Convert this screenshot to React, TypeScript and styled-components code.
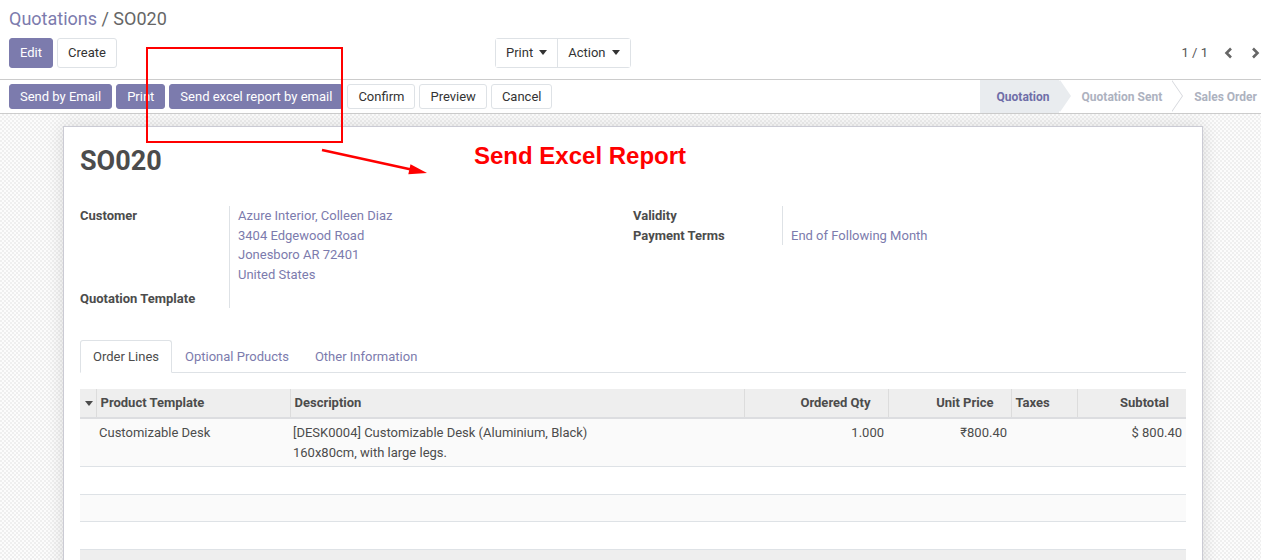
import React from 'react';
import styled, { createGlobalStyle, css } from 'styled-components';

const PRIMARY = '#7C7BAD';
const LINE = '#dee2e6';

const GlobalStyle = createGlobalStyle`
  html, body {
    margin: 0;
    padding: 0;
  }
  body {
    font-family: Roboto, 'Noto Sans', 'Liberation Sans', sans-serif;
    font-size: 13px;
    line-height: 1.5;
    color: #4c4c4c;
    background: #fff;
    overflow: hidden;
  }
  * {
    box-sizing: border-box;
  }
`;

const Page = styled.div`
  position: relative;
  width: 1261px;
  height: 560px;
  overflow: hidden;
  display: flex;
  flex-direction: column;
`;

/* ---------- control panel ---------- */

const ControlPanel = styled.div`
  padding: 6px 0 11px 0;
  border-bottom: 1px solid #ccc;
`;

const Breadcrumb = styled.div`
  padding-left: 9px;
  font-size: 18px;
  line-height: 26px;
  margin-bottom: 6px;
  color: #666;

  a {
    color: ${PRIMARY};
    text-decoration: none;
  }
`;

const CpRow = styled.div`
  display: grid;
  grid-template-columns: 50% 50%;
  height: 30px;
`;

const CpLeft = styled.div`
  display: flex;
  justify-content: space-between;
  padding-left: 9px;
`;

const CpRight = styled.div`
  display: flex;
  justify-content: flex-end;
  align-items: center;
  margin-right: -8px;
`;

const ButtonGroup = styled.div<{ $gap?: number }>`
  display: flex;
  gap: ${(p) => p.$gap ?? 4}px;
`;

const Button = styled.button<{ $primary?: boolean; $compact?: boolean }>`
  font-family: inherit;
  font-size: 13px;
  line-height: ${(p) => (p.$compact ? '19px' : '20px')};
  padding: ${(p) => (p.$compact ? '2px 10px' : '4px 10px')};
  border-radius: 3px;
  border: 1px solid ${(p) => (p.$primary ? PRIMARY : LINE)};
  background: ${(p) => (p.$primary ? PRIMARY : '#fff')};
  color: ${(p) => (p.$primary ? '#fff' : '#333')};
  white-space: nowrap;
  cursor: pointer;
`;

const DropGroup = styled.div`
  display: flex;
  border: 1px solid ${LINE};
  border-radius: 3px;
`;

const DropButton = styled.button`
  font-family: inherit;
  font-size: 13px;
  line-height: 20px;
  padding: 4px 10px;
  border: none;
  background: #fff;
  color: #333;
  display: flex;
  align-items: center;

  & + & {
    border-left: 1px solid ${LINE};
  }
`;

const Caret = styled.span`
  display: inline-block;
  margin-left: 6px;
  margin-top: -2px;
  border-top: 5px solid #333;
  border-left: 4.5px solid transparent;
  border-right: 4.5px solid transparent;
`;

const PagerValue = styled.span`
  color: #555;
  margin-right: 7px;
`;

const PagerButton = styled.button`
  width: 27px;
  height: 30px;
  border: none;
  background: transparent;
  display: flex;
  align-items: center;
  justify-content: center;
  padding: 0;
`;

const Chevron = ({ dir }: { dir: 'left' | 'right' }) => (
  <svg width="9" height="12" viewBox="0 0 9 12">
    <polyline
      points={dir === 'left' ? '7,1.5 2.5,6 7,10.5' : '2,1.5 6.5,6 2,10.5'}
      fill="none"
      stroke="#666"
      strokeWidth="2.6"
      strokeLinejoin="miter"
    />
  </svg>
);

/* ---------- status bar ---------- */

const StatusBar = styled.div`
  display: flex;
  justify-content: space-between;
  height: 34px;
  border-bottom: 1px solid #ccc;
`;

const StatusButtons = styled.div`
  display: flex;
  gap: 4px;
  padding: 4px 9px;
`;

const Steps = styled.div`
  display: flex;
  margin-right: -5px;
`;

const Step = styled.div<{ $active?: boolean; $first?: boolean; $last?: boolean }>`
  position: relative;
  display: flex;
  align-items: center;
  padding: 0 9px 0 ${(p) => (p.$first ? 17 : 23)}px;
  background: ${(p) => (p.$active ? '#e9ecef' : '#fff')};
  color: ${(p) => (p.$active ? '#6f6ea8' : '#adb2bf')};
  font-size: 12px;
  font-weight: 700;
  white-space: nowrap;

  ${(p) =>
    !p.$last &&
    css`
      &::before,
      &::after {
        content: '';
        position: absolute;
        top: 0;
        left: 100%;
        border-top: 16.5px solid transparent;
        border-bottom: 16.5px solid transparent;
        border-left: 11px solid transparent;
        z-index: 1;
      }
      &::before {
        border-left-color: ${p.$active ? '#e9ecef' : '#d6d8dd'};
        margin-left: 1px;
      }
      &::after {
        border-left-color: ${p.$active ? '#e9ecef' : '#fff'};
      }
    `}
`;

/* ---------- sheet ---------- */

const SheetBg = styled.div`
  flex: 1;
  background-color: #f8f8f8;
  background-image: repeating-conic-gradient(#efefef 0% 25%, #fcfcfc 0% 50%);
  background-size: 4px 4px;
  padding: 12px 0 0 63px;
`;

const Sheet = styled.div`
  width: 1140px;
  height: 480px;
  background: #fff;
  border: 1px solid #cbcbd4;
  box-shadow: 0 0 16px rgba(0, 0, 0, 0.13);
  padding: 15px 16px 0;
`;

const Title = styled.h1`
  margin: 0;
  font-size: 27px;
  line-height: 38px;
  font-weight: 700;
  color: #4c4c4c;
`;

const Groups = styled.div`
  display: grid;
  grid-template-columns: 1fr 1fr;
  margin-top: 26px;
`;

const FieldTable = styled.div`
  display: grid;
  grid-template-columns: 149px 1fr;
  align-content: start;
`;

const Label = styled.div`
  font-weight: 700;
  line-height: 19.5px;
  color: #4c4c4c;
`;

const Value = styled.div`
  border-left: 1px solid ${LINE};
  padding-left: 8px;
  line-height: 19.5px;
  color: ${PRIMARY};
  min-height: 19.5px;
`;

const Address = styled.div`
  margin-bottom: 4.5px;
`;

const Tabs = styled.ul`
  list-style: none;
  margin: 32px 0 0;
  padding: 0;
  display: flex;
  border-bottom: 1px solid ${LINE};
`;

const Tab = styled.li<{ $active?: boolean }>`
  padding: 6px 12px;
  line-height: 19px;
  margin-bottom: -1px;
  border: 1px solid transparent;
  border-radius: 3px 3px 0 0;
  color: ${PRIMARY};

  ${(p) =>
    p.$active &&
    css`
      border-color: ${LINE} ${LINE} #fff;
      background: #fff;
      color: #4c4c4c;
    `}
`;

const Table = styled.table`
  width: 100%;
  margin-top: 16px;
  border-collapse: collapse;
  table-layout: fixed;
`;

const Th = styled.th<{ $num?: boolean }>`
  background: #eee;
  font-weight: 700;
  line-height: 20px;
  padding: 4px ${(p) => (p.$num ? '17px' : '4px')} 4px 4px;
  text-align: ${(p) => (p.$num ? 'right' : 'left')};
  border-bottom: 2px solid #dcdde0;
  white-space: nowrap;
  color: #4c4c4c;

  & + & {
    border-left: 1px solid #dcdcdc;
  }
`;

const Row = styled.tr<{ $striped?: boolean }>`
  background: ${(p) => (p.$striped ? '#fafafa' : '#fff')};
  border-bottom: 1px solid ${LINE};
`;

const Td = styled.td<{ $num?: boolean }>`
  padding: 4px ${(p) => (p.$num ? '4px' : '3px')} 4px 3px;
  line-height: 19.5px;
  text-align: ${(p) => (p.$num ? 'right' : 'left')};
  vertical-align: top;
  color: #4c4c4c;
`;

const EmptyCell = styled.td`
  padding: 3.5px 3px;
  line-height: 19.5px;
`;

const FootRow = styled.tr`
  background: #eee;
  height: 28px;
`;

const SortCaret = styled.span`
  display: inline-block;
  vertical-align: middle;
  margin-left: 1px;
  border-top: 5px solid #4c4c4c;
  border-left: 4px solid transparent;
  border-right: 4px solid transparent;
`;

/* ---------- annotation overlay ---------- */

const Callout = styled.div`
  position: absolute;
  left: 146px;
  top: 47px;
  width: 197px;
  height: 96px;
  border: 2px solid #ff0000;
  pointer-events: none;
`;

const CalloutArrow = styled.svg`
  position: absolute;
  left: 310px;
  top: 140px;
  pointer-events: none;
`;

const CalloutLabel = styled.div`
  position: absolute;
  left: 474px;
  top: 142px;
  font-family: 'Liberation Sans', Arial, sans-serif;
  font-size: 24px;
  line-height: 28px;
  font-weight: 700;
  color: #ff0000;
  white-space: nowrap;
`;

const lines = [
  {
    product: 'Customizable Desk',
    description: ['[DESK0004] Customizable Desk (Aluminium, Black)', '160x80cm, with large legs.'],
    qty: '1.000',
    price: '₹800.40',
    taxes: '',
    subtotal: '$ 800.40',
  },
];

export default function App() {
  return (
    <Page>
      <GlobalStyle />
      <ControlPanel>
        <Breadcrumb>
          <a href="#">Quotations</a> / SO020
        </Breadcrumb>
        <CpRow>
          <CpLeft>
            <ButtonGroup>
              <Button $primary>Edit</Button>
              <Button>Create</Button>
            </ButtonGroup>
            <DropGroup>
              <DropButton>
                Print
                <Caret />
              </DropButton>
              <DropButton>
                Action
                <Caret />
              </DropButton>
            </DropGroup>
          </CpLeft>
          <CpRight>
            <PagerValue>1 / 1</PagerValue>
            <PagerButton aria-label="Previous">
              <Chevron dir="left" />
            </PagerButton>
            <PagerButton aria-label="Next">
              <Chevron dir="right" />
            </PagerButton>
          </CpRight>
        </CpRow>
      </ControlPanel>

      <StatusBar>
        <StatusButtons>
          <Button $primary $compact>Send by Email</Button>
          <Button $primary $compact>Print</Button>
          <Button $primary $compact>Send excel report by email</Button>
          <Button $compact>Confirm</Button>
          <Button $compact>Preview</Button>
          <Button $compact>Cancel</Button>
        </StatusButtons>
        <Steps>
          <Step $active $first>Quotation</Step>
          <Step>Quotation Sent</Step>
          <Step $last>Sales Order</Step>
        </Steps>
      </StatusBar>

      <SheetBg>
        <Sheet>
          <Title>SO020</Title>
          <Groups>
            <FieldTable>
              <Label>Customer</Label>
              <Value>
                <Address>
                  Azure Interior, Colleen Diaz
                  <br />
                  3404 Edgewood Road
                  <br />
                  Jonesboro AR 72401
                  <br />
                  United States
                </Address>
              </Value>
              <Label>Quotation Template</Label>
              <Value />
            </FieldTable>
            <FieldTable>
              <Label>Validity</Label>
              <Value />
              <Label>Payment Terms</Label>
              <Value>End of Following Month</Value>
            </FieldTable>
          </Groups>

          <Tabs>
            <Tab $active>Order Lines</Tab>
            <Tab>Optional Products</Tab>
            <Tab>Other Information</Tab>
          </Tabs>

          <Table>
            <colgroup>
              <col style={{ width: 16 }} />
              <col style={{ width: 194 }} />
              <col style={{ width: 454 }} />
              <col style={{ width: 144 }} />
              <col style={{ width: 123 }} />
              <col style={{ width: 66 }} />
              <col style={{ width: 109 }} />
            </colgroup>
            <thead>
              <tr>
                <Th>
                  <SortCaret />
                </Th>
                <Th>Product Template</Th>
                <Th>Description</Th>
                <Th $num>Ordered Qty</Th>
                <Th $num>Unit Price</Th>
                <Th>Taxes</Th>
                <Th $num>Subtotal</Th>
              </tr>
            </thead>
            <tbody>
              {lines.map((l) => (
                <Row key={l.product} $striped>
                  <Td />
                  <Td>{l.product}</Td>
                  <Td>
                    {l.description[0]}
                    <br />
                    {l.description[1]}
                  </Td>
                  <Td $num>{l.qty}</Td>
                  <Td $num>{l.price}</Td>
                  <Td>{l.taxes}</Td>
                  <Td $num>{l.subtotal}</Td>
                </Row>
              ))}
              {[false, true, false].map((striped, i) => (
                <Row key={i} $striped={striped}>
                  <EmptyCell colSpan={7}>&nbsp;</EmptyCell>
                </Row>
              ))}
            </tbody>
            <tfoot>
              <FootRow>
                <td colSpan={7} />
              </FootRow>
            </tfoot>
          </Table>
        </Sheet>
      </SheetBg>

      <Callout />
      <CalloutArrow width="130" height="45" viewBox="0 0 130 45">
        <line x1="12" y1="10" x2="100" y2="29.3" stroke="#ff0000" strokeWidth="2.5" />
        <polygon points="117,33 98.3,34.2 100.5,24.2" fill="#ff0000" />
      </CalloutArrow>
      <CalloutLabel>Send Excel Report</CalloutLabel>
    </Page>
  );
}
